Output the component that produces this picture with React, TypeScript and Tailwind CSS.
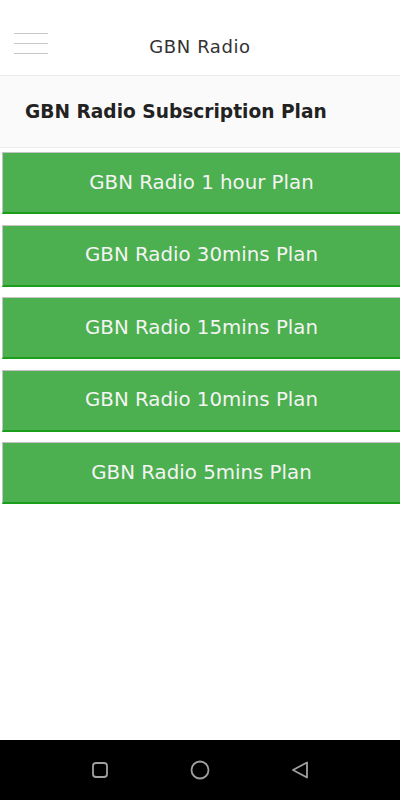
const plans = [
  "GBN Radio 1 hour Plan",
  "GBN Radio 30mins Plan",
  "GBN Radio 15mins Plan",
  "GBN Radio 10mins Plan",
  "GBN Radio 5mins Plan",
];

function NavBar() {
  return (
    <div className="flex h-[60px] items-center justify-center gap-[80px] bg-black">
      <svg width="20" height="20" viewBox="0 0 20 20">
        <rect x="3" y="3" width="14" height="14" rx="3" fill="none" stroke="#a0a0a0" strokeWidth="1.8" />
      </svg>
      <svg width="20" height="20" viewBox="0 0 20 20">
        <circle cx="10" cy="10" r="8.5" fill="none" stroke="#a0a0a0" strokeWidth="1.8" />
      </svg>
      <svg width="20" height="20" viewBox="0 0 20 20">
        <path d="M17 2.5 L17 17.5 L3 10 Z" fill="none" stroke="#a0a0a0" strokeWidth="1.8" strokeLinejoin="round" />
      </svg>
    </div>
  );
}

export default function App() {
  return (
    <div className="flex h-[800px] w-[400px] flex-col overflow-hidden bg-white font-['DejaVu_Sans',sans-serif]">
      <header className="relative flex h-[76px] items-start justify-center border-b border-[#ececec] pt-[36px]">
        <div className="absolute left-[14px] top-[33px] flex w-[34px] flex-col gap-[9px]">
          <span className="h-px bg-[#c8c8c8]" />
          <span className="h-px bg-[#c8c8c8]" />
          <span className="h-px bg-[#c8c8c8]" />
        </div>
        <h1 className="text-[18px] leading-[22px] tracking-[0.6px] text-[#333]">GBN Radio</h1>
      </header>
      <div className="flex h-[72px] items-center border-b border-[#ececec] bg-[#fafafa] px-[25px]">
        <h2 className="text-[18.6px] font-bold text-[#222]">GBN Radio Subscription Plan</h2>
      </div>
      <div className="flex flex-1 flex-col gap-[10.5px] pl-[2px] pt-[4px]">
        {plans.map((p) => (
          <button
            key={p}
            className="flex h-[62px] w-[398px] items-center justify-center border-l border-t border-b-2 border-l-[#c4c4c4] border-t-[#c4c4c4] border-b-[#1a9e1a] bg-[#4caf50] text-[19.8px] text-[#f4f4f4]"
          >
            {p}
          </button>
        ))}
      </div>
      <NavBar />
    </div>
  );
}
